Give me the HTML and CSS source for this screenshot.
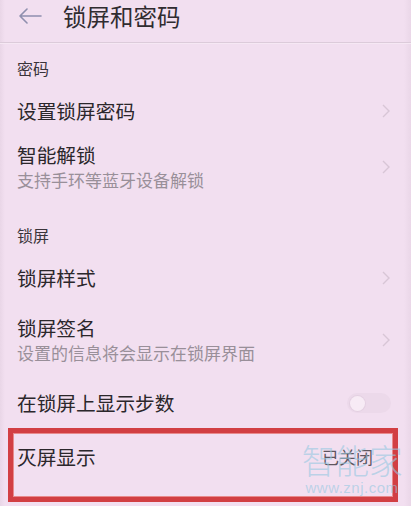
FILE: index.html
```html
<!DOCTYPE html>
<html lang="zh-CN">
<head>
<meta charset="utf-8">
<title>锁屏和密码</title>
<link rel="stylesheet" href="styles.css">
</head>
<body>
<div class="screen">
  <header class="topbar">
    <svg class="back" width="24" height="16" viewBox="0 0 24 16"><path d="M23 8H2M9 1L2 8l7 7" fill="none" stroke="#8f8fae" stroke-width="1.6" stroke-linecap="round" stroke-linejoin="round"/></svg>
    <span class="title">锁屏和密码</span>
  </header>

  <div class="sec sec-first">密码</div>
  <div class="row row-single">
    <span class="label">设置锁屏密码</span>
    <svg class="chev" width="8" height="14" viewBox="0 0 8 14"><path d="M1 1l6 6-6 6" fill="none" stroke="#d8c6d6" stroke-width="1.4"/></svg>
  </div>
  <div class="row row-double r2">
    <div class="texts">
      <span class="label">智能解锁</span>
      <span class="sub">支持手环等蓝牙设备解锁</span>
    </div>
    <svg class="chev" width="8" height="14" viewBox="0 0 8 14"><path d="M1 1l6 6-6 6" fill="none" stroke="#d8c6d6" stroke-width="1.4"/></svg>
  </div>

  <div class="sec sec-second">锁屏</div>
  <div class="row row-single r3">
    <span class="label">锁屏样式</span>
    <svg class="chev" width="8" height="14" viewBox="0 0 8 14"><path d="M1 1l6 6-6 6" fill="none" stroke="#d8c6d6" stroke-width="1.4"/></svg>
  </div>
  <div class="row row-double r4">
    <div class="texts">
      <span class="label">锁屏签名</span>
      <span class="sub">设置的信息将会显示在锁屏界面</span>
    </div>
    <svg class="chev" width="8" height="14" viewBox="0 0 8 14"><path d="M1 1l6 6-6 6" fill="none" stroke="#d8c6d6" stroke-width="1.4"/></svg>
  </div>
  <div class="row row-single r5">
    <span class="label">在锁屏上显示步数</span>
    <span class="toggle"><span class="knob"></span></span>
  </div>

  <div class="highlight">
    <span class="label">灭屏显示</span>
    <span class="value">已关闭</span>
  </div>

  <div class="watermark">
    <span class="wm-big">智能家</span>
    <span class="wm-small">www.znj.com</span>
  </div>
</div>
</body>
</html>
```

FILE: styles.css
```css
html, body {
  margin: 0;
  padding: 0;
}
body {
  background: #f2dff0;
  font-family: "Noto Sans CJK SC", "Noto Sans", sans-serif;
  color: #2e2a2e;
}
.screen {
  position: relative;
  width: 411px;
  height: 506px;
  overflow: hidden;
  display: flex;
  flex-direction: column;
  background: linear-gradient(90deg, #e9d6e7 0, #f2dff0 5px, #f2dff0 404px, #ead7e8 411px);
}
.topbar {
  display: flex;
  align-items: center;
  height: 28px;
  padding-top: 2px;
  padding-bottom: 12px;
  border-bottom: 1px solid #dccbda;
  box-shadow: 0 1px 0 #f6e8f4;
}
.back {
  margin-left: 18px;
  margin-right: 21px;
}
.title {
  font-size: 23.5px;
  line-height: 28px;
  color: #302c30;
}
.sec {
  padding-left: 17px;
  font-size: 16px;
  line-height: 24px;
  color: #3a343a;
}
.sec-first {
  padding-top: 13px;
  padding-bottom: 10px;
}
.sec-second {
  padding-top: 17px;
  padding-bottom: 7px;
}
.row {
  display: flex;
  align-items: center;
  justify-content: space-between;
  padding-left: 17px;
  padding-right: 21px;
}
.row-single {
  padding-top: 8px;
  padding-bottom: 8px;
}
.r3 {
  padding-top: 11px;
  padding-bottom: 11px;
}
.r5 {
  padding-top: 12px;
  padding-bottom: 12px;
  padding-right: 20px;
}
.row-double {
  padding-top: 10px;
  padding-bottom: 14px;
}
.r4 {
  padding-top: 13px;
  padding-bottom: 13px;
}
.texts {
  display: flex;
  flex-direction: column;
}
.label {
  font-size: 19.7px;
  line-height: 26px;
  color: #2b272b;
}
.sub {
  font-size: 17px;
  line-height: 24px;
  color: #998f99;
}
.chev {
  display: block;
}
.toggle {
  width: 44px;
  height: 20px;
  border-radius: 10px;
  background: #ecd9ea;
  display: flex;
  align-items: center;
  padding-left: 3px;
  box-sizing: border-box;
}
.knob {
  width: 15px;
  height: 15px;
  border-radius: 50%;
  background: #f7ebf5;
  box-shadow: 0 0 0 1px #e4d0e2;
}
.highlight {
  margin-left: 8px;
  width: 390px;
  height: 74px;
  box-sizing: border-box;
  border: 5px solid #d23f43;
  box-shadow: inset 0 0 0 1px #e88a8c;
  display: flex;
  align-items: flex-start;
  justify-content: space-between;
  padding: 11px 20px 0 4px;
}
.value {
  font-size: 17px;
  line-height: 24px;
  margin-top: 1px;
  color: #5e565e;
}
.watermark {
  position: absolute;
  left: 300px;
  top: 440px;
  width: 104px;
  display: flex;
  flex-direction: column;
  align-items: center;
  color: rgba(150, 200, 225, 0.6);
  pointer-events: none;
}
.wm-big {
  font-size: 34px;
  line-height: 40px;
  letter-spacing: -0.5px;
  font-weight: 300;
}
.wm-small {
  font-family: "Liberation Sans", sans-serif;
  font-size: 15px;
  line-height: 16px;
  letter-spacing: 0.5px;
}
```
